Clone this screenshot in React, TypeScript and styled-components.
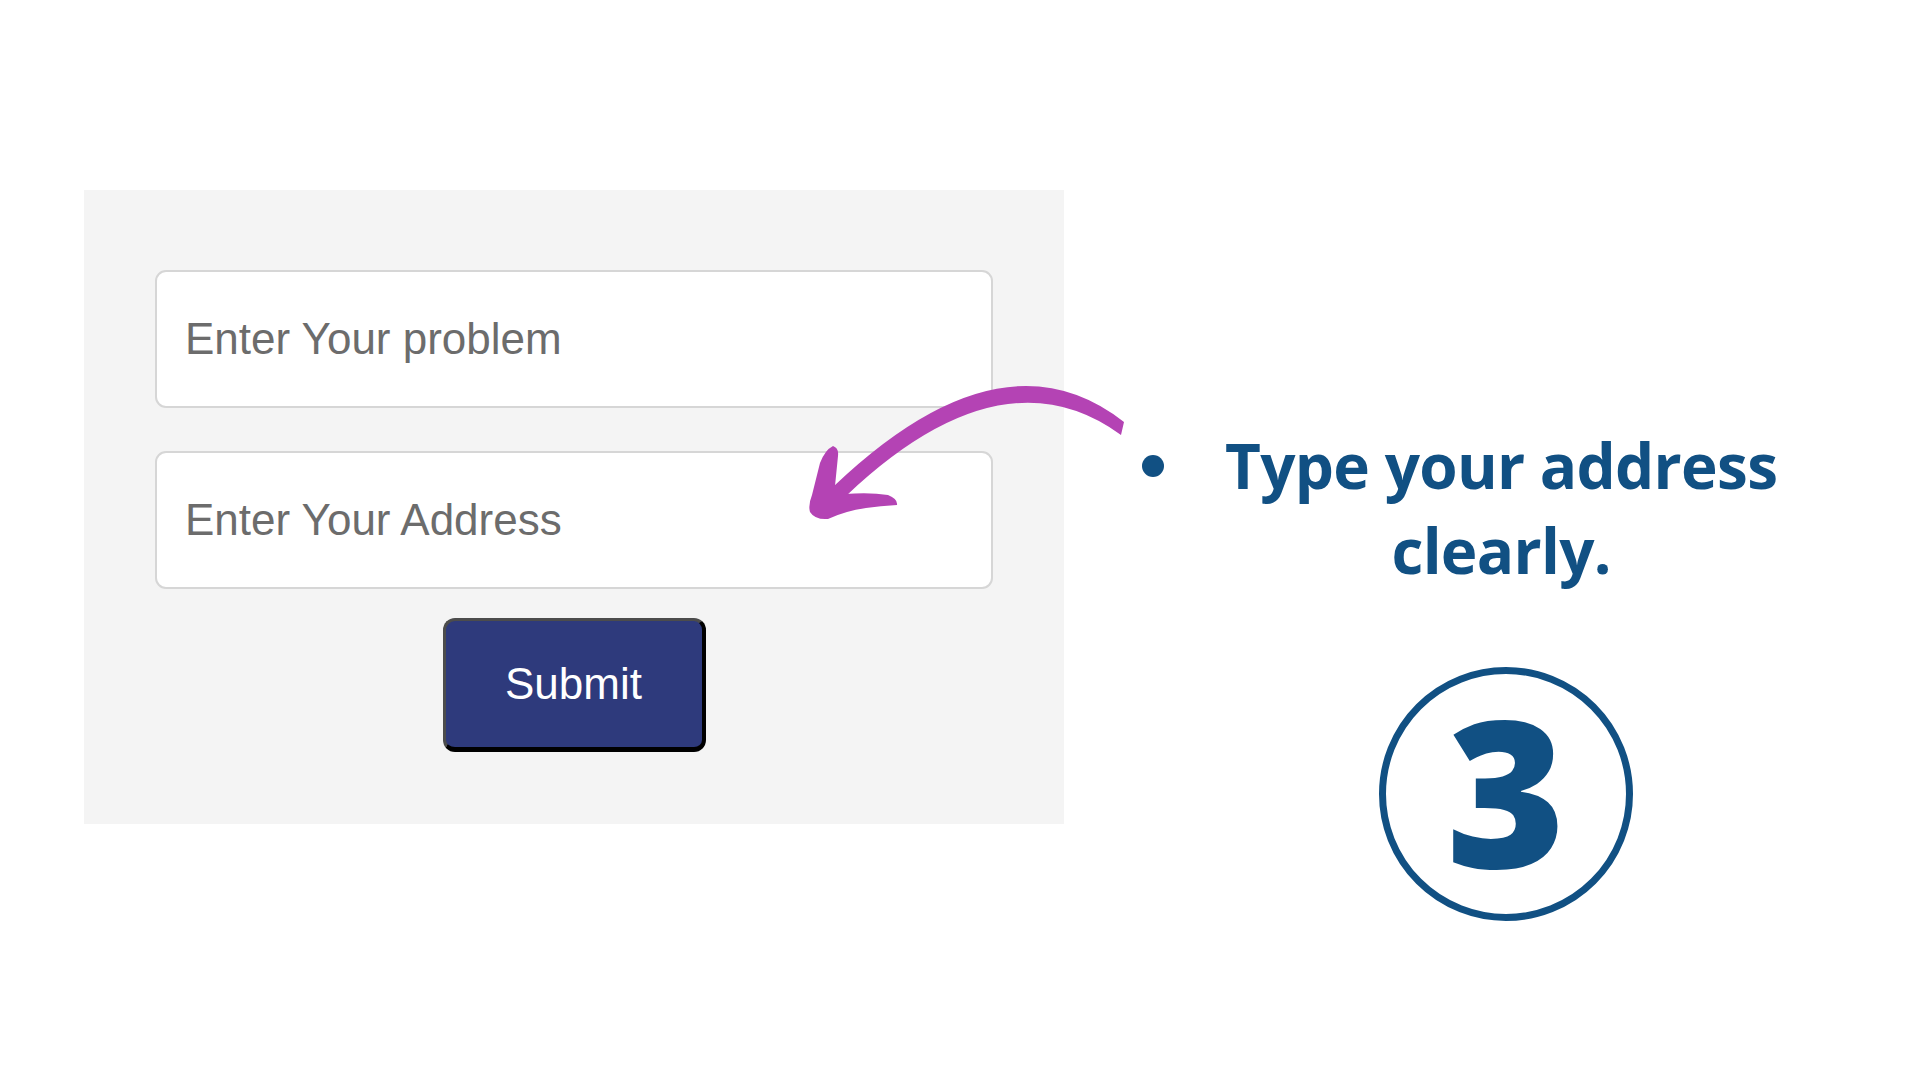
import styled, { createGlobalStyle } from "styled-components";

const GlobalStyle = createGlobalStyle`
    html, body {
        margin: 0;
        padding: 0;
        background: #ffffff;
    }
    * {
        box-sizing: border-box;
    }
`

const Page = styled.div`
    position: relative;
    width: 1920px;
    height: 1080px;
    overflow: hidden;
    display: flex;
    align-items: flex-start;
    padding: 190px 0 0 84px;
`

const FormPanel = styled.form`
    width: 980px;
    height: 634px;
    background: #f4f4f4;
    padding: 80px 71px 0;
    display: flex;
    flex-direction: column;
    align-items: center;
`

const Field = styled.input<{ $gap?: number }>`
    width: 838px;
    height: 138px;
    margin-bottom: ${p => p.$gap ?? 0}px;
    background: #ffffff;
    border: 2px solid #d6d6d6;
    border-radius: 11px;
    padding: 0 0 0 28px;
    font-family: "Liberation Sans", Arial, sans-serif;
    font-size: 44px;
    color: #333;
    outline: none;

    &::placeholder {
        color: #6c6c6c;
    }
`

const SubmitButton = styled.button`
    width: 263px;
    height: 134px;
    background: #2e3a7c;
    color: #ffffff;
    font-family: "Liberation Sans", Arial, sans-serif;
    font-size: 44px;
    border-style: solid;
    border-width: 3px 4px 5px 3px;
    border-color: #4c4c4c #000000 #000000 #4c4c4c;
    border-radius: 12px;
    padding: 0;
    cursor: pointer;
`

const Aside = styled.div`
    display: flex;
    align-items: flex-start;
    margin: 233px 0 0 78px;
`

const Bullet = styled.span`
    width: 22px;
    height: 22px;
    border-radius: 50%;
    background: #115083;
    margin-top: 32px;
    flex-shrink: 0;
`

const TextColumn = styled.div`
    width: max-content;
    margin-left: 61px;
    display: flex;
    flex-direction: column;
    align-items: center;
`

const Heading = styled.p`
    margin: 0;
    font-family: "Open Sans", "Noto Sans", sans-serif;
    font-weight: 700;
    font-size: 62px;
    letter-spacing: -0.7px;
    line-height: 85px;
    color: #115083;
    text-align: center;
    white-space: nowrap;
`

const StepBadge = styled.div`
    width: 254px;
    height: 254px;
    margin: 74px 0 0 10px;
    border: 7px solid #115083;
    border-radius: 50%;
    display: flex;
    align-items: center;
    justify-content: center;
`

const StepNumber = styled.span`
    font-family: "Open Sans", "Noto Sans", sans-serif;
    font-weight: 800;
    font-size: 204px;
    line-height: 1;
    color: #115083;
    margin-bottom: 10px;
`

const ArrowLayer = styled.svg`
    position: absolute;
    inset: 0;
    pointer-events: none;
`

const Arrow = () => (
    <ArrowLayer width="1920" height="1080" viewBox="0 0 1920 1080">
        <g fill="#b443b4">
            {/* brush curve, thicker in the middle */}
            <path d="M1124 422 Q1002 326 834 486 L846 496 Q1002 348 1121 435 Z" />
            {/* arrow head */}
            <path d="M833 446 Q839 448 838 456 L835 486 L845 494 Q870 492 888 495 Q898 499 897 505 Q880 506 866 508 Q845 511 828 519 Q815 520 810 512 Q808 505 812 495 L820 463 Q825 450 833 446 Z" />
        </g>
    </ArrowLayer>
)

export default function App() {
    return (
        <>
            <GlobalStyle />
            <Page>
                <FormPanel onSubmit={e => e.preventDefault()}>
                    <Field type="text" placeholder="Enter Your problem" $gap={43} />
                    <Field type="text" placeholder="Enter Your Address" $gap={29} />
                    <SubmitButton type="submit">Submit</SubmitButton>
                </FormPanel>

                <Aside>
                    <Bullet />
                    <TextColumn>
                        <Heading>
                            Type your address
                            <br />
                            clearly.
                        </Heading>
                        <StepBadge>
                            <StepNumber>3</StepNumber>
                        </StepBadge>
                    </TextColumn>
                </Aside>

                <Arrow />
            </Page>
        </>
    );
}
